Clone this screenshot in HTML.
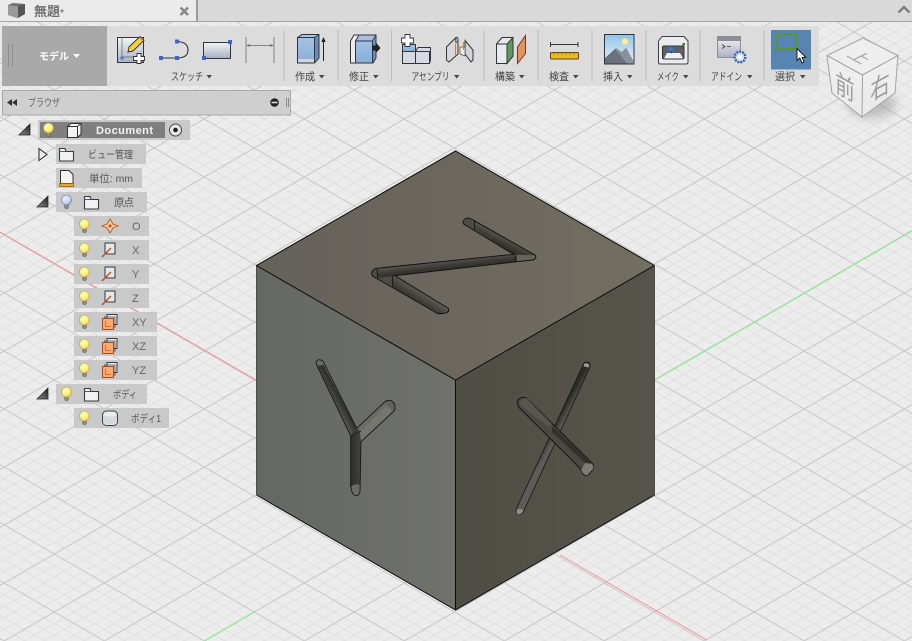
<!DOCTYPE html>
<html><head><meta charset="utf-8"><style>
html,body{margin:0;padding:0;background:#ececec;width:912px;height:641px;overflow:hidden}
svg{display:block}
text{font-family:"Liberation Sans","Noto Sans CJK JP",sans-serif}
.l{font-size:10.5px;fill:#444}
.t{font-size:10.5px;fill:#555}
</style></head><body>
<svg width="912" height="641" viewBox="0 0 912 641" xmlns="http://www.w3.org/2000/svg">
<defs>
<pattern id="grid" patternUnits="userSpaceOnUse" width="100" height="100" patternTransform="matrix(.5,-.29,.5,.29,454.3,496)">
<rect width="100" height="100" fill="#ececec"/>
<g stroke="#e0e0e0" stroke-width="2" fill="none">
<path d="M20 0V100M40 0V100M60 0V100M80 0V100M0 20H100M0 40H100M0 60H100M0 80H100"/>
</g>
<g stroke="#c8c8c8" stroke-width="2" fill="none"><path d="M0 0V100M100 0V100M0 0H100M0 100H100"/></g>
</pattern>
<linearGradient id="fl" x1="0" x2="1" y1="0" y2="0"><stop offset="0" stop-color="#656762"/><stop offset="1" stop-color="#70716c"/></linearGradient>
<linearGradient id="fr" x1="0" x2="1" y1="0" y2="0"><stop offset="0" stop-color="#504d45"/><stop offset="1" stop-color="#57544b"/></linearGradient>
<linearGradient id="ft" x1="0" x2="1" y1="0" y2="0"><stop offset="0" stop-color="#65615b"/><stop offset="1" stop-color="#726e61"/></linearGradient>
<linearGradient id="zt" gradientUnits="userSpaceOnUse" x1="503" y1="235" x2="498" y2="245"><stop offset="0" stop-color="#5b5950"/><stop offset=".55" stop-color="#403f3a"/><stop offset="1" stop-color="#2d2c29"/></linearGradient>
<linearGradient id="zd" gradientUnits="userSpaceOnUse" x1="450" y1="261" x2="451" y2="269.500"><stop offset="0" stop-color="#54524a"/><stop offset=".5" stop-color="#3c3b37"/><stop offset="1" stop-color="#2d2c29"/></linearGradient>
<linearGradient id="zl" gradientUnits="userSpaceOnUse" x1="424" y1="294" x2="417" y2="305"><stop offset="0" stop-color="#5b5950"/><stop offset=".55" stop-color="#403f3a"/><stop offset="1" stop-color="#2d2c29"/></linearGradient>
<linearGradient id="ya" gradientUnits="userSpaceOnUse" x1="331" y1="401" x2="340" y2="396"><stop offset="0" stop-color="#5c5c56"/><stop offset=".6" stop-color="#3d3d38"/><stop offset="1" stop-color="#2c2c28"/></linearGradient>
<linearGradient id="ys" gradientUnits="userSpaceOnUse" x1="351" y1="0" x2="361" y2="0"><stop offset="0" stop-color="#2e2e2a"/><stop offset="1" stop-color="#44443e"/></linearGradient>
<linearGradient id="xb" gradientUnits="userSpaceOnUse" x1="549" y1="433" x2="556" y2="437"><stop offset="0" stop-color="#2c2b28"/><stop offset="1" stop-color="#5e5c54"/></linearGradient>
<linearGradient id="blue" x1="0" x2="0" y1="0" y2="1"><stop offset="0" stop-color="#a9c5e6"/><stop offset="1" stop-color="#8aaed6"/></linearGradient>
<linearGradient id="wg" x1="0" x2="0" y1="0" y2="1"><stop offset="0" stop-color="#f4f4f4"/><stop offset="1" stop-color="#a8b0c4"/></linearGradient>
<linearGradient id="sky" x1="0" x2="0" y1="0" y2="1"><stop offset="0" stop-color="#8fc3e8"/><stop offset="1" stop-color="#eef5f8"/></linearGradient>
<linearGradient id="tri" x1="0" x2="1" y1="1" y2="0"><stop offset="0" stop-color="#888"/><stop offset="1" stop-color="#222"/></linearGradient>
<radialGradient id="by" cx=".4" cy=".35" r=".75"><stop offset="0" stop-color="#fffdd0"/><stop offset=".65" stop-color="#fcec66"/><stop offset="1" stop-color="#d4b63a"/></radialGradient>
<radialGradient id="bb" cx=".4" cy=".35" r=".7"><stop offset="0" stop-color="#eef3ff"/><stop offset=".7" stop-color="#bcd0f2"/><stop offset="1" stop-color="#7f94bb"/></radialGradient>
<filter id="b1" x="-50%" y="-50%" width="200%" height="200%"><feGaussianBlur stdDeviation="5"/></filter>
<filter id="b2"><feGaussianBlur stdDeviation=".35"/></filter>
<g id="bulb"><path d="M-1.800 4H1.800V8Q0 9.300-1.800 8Z" fill="#8a8a8a" stroke="#555" stroke-width=".5"/><circle r="5" fill="url(#by)" stroke="#b3a24a" stroke-width=".6"/></g>
<g id="bulbb"><path d="M-1.800 4H1.800V8Q0 9.300-1.800 8Z" fill="#8a8a8a" stroke="#555" stroke-width=".5"/><circle r="5" fill="url(#bb)" stroke="#6d7e9e" stroke-width=".6"/></g>
<g id="folder"><path d="M.5 2.500V13H14.500V3.500H7L6 .5H.5Z" fill="#f1f1f1" stroke="#333c4a" stroke-width="1.100"/><path d="M.5 3.500H7" stroke="#333c4a" stroke-width=".8"/></g>
<g id="axis"><path d="M3 1H13V12H3Z" fill="#e6e6e6" stroke="#333c4a" stroke-width="1"/><path d="M0 15L9 6" stroke="#c24f1e" stroke-width="1.400"/></g>
<g id="plane"><path d="M5 0.500H15V10.500H5Z" fill="#efefef" stroke="#333c4a" stroke-width="1"/><path d="M2.500 3H13V13H2.500Z" fill="none" stroke="#333c4a" stroke-width=".8"/><rect x=".5" y="4.500" width="11" height="11" fill="#f9ab74" stroke="#b5450e"/><path d="M3.500 7V12.500H9" stroke="#cf6a2e" fill="none"/></g>
</defs>

<!-- viewport -->
<rect width="912" height="641" fill="#ececec"/>
<rect width="912" height="641" fill="url(#grid)"/>
<path d="M0 232L256 380M560 555L706.700 640" stroke="#f78f8f" stroke-width="1"/>
<path d="M655 380L793 300L912 231M204.600 641L256 611" stroke="#7df07d" stroke-width="1"/>

<!-- big cube -->
<path d="M256.500 265.500L455.500 380V610L256.500 495Z" fill="url(#fl)"/>
<path d="M654.500 265.500L455.500 380V610L654.500 495Z" fill="url(#fr)"/>
<path d="M455.500 151L654.500 265.500L455.500 380L256.500 265.500Z" fill="url(#ft)"/>
<path d="M256.500 265.500V495M654.500 265.500V495" stroke="#4b4b47" stroke-width="1" fill="none"/>
<path d="M256.500 495L455.500 610L654.500 495M654.500 265.500L455.500 151L256.500 265.500L455.500 380L654.500 265.500M455.500 380V610" stroke="#0b0b0b" stroke-width="1" fill="none"/>

<!-- Z -->
<g filter="url(#b2)">
<path d="M470 218.300L535 255Q536.500 257 535.500 258Q534.500 260 532.700 260L516.700 261.700L395 275.700L448.300 308.300Q449.500 311 447.300 312.300Q444 314.300 437.500 313.500L372.500 276Q371 273 372 271.700Q373.500 268.800 376.700 268.300L513.500 254.300L463.500 224Q462.500 221 464 220Q466 217.300 470 218.300Z" fill="#4e4c46"/>
<path d="M470 218.300L535 255Q536 257 535.500 258L532.700 260L516.700 261.700L513.500 254.300L474.500 229Z" fill="url(#zt)"/>
<path d="M515.500 254.500L535 255.500Q536 257.500 532.700 260L516.700 261.700Z" fill="#66635a"/>
<path d="M377 268.500L516.700 254.300V261.700L395 275.700L377 278Z" fill="url(#zd)"/>
<path d="M392.500 276L448.300 308.300Q449.500 311 447.300 312.300Q444 314.300 437.500 313.500L392.500 287Z" fill="url(#zl)"/>
<path d="M470 218.300L535 255Q536.500 257 535.500 258Q534.500 260 532.700 260L516.700 261.700L395 275.700L448.300 308.300Q449.500 311 447.300 312.300Q444 314.300 437.500 313.500L372.500 276Q371 273 372 271.700Q373.500 268.800 376.700 268.300L513.500 254.300L463.500 224Q462.500 221 464 220Q466 217.300 470 218.300Z" fill="none" stroke="#111110" stroke-width=".9"/>
<path d="M474.500 220V229.500M515.700 254.500V261.500M377.300 269V277M392.500 276V286" stroke="#111" stroke-width=".8"/>
</g>

<!-- Y -->
<g filter="url(#b2)">
<path d="M323.300 361.700L356.700 428.300L385 401.700Q388 399.500 391 400.500Q395.500 403 395 408.300Q395 410.500 393.300 411.700L361 441.700L360 491.700Q359 495.700 356.700 495.700Q353 495.700 352 491.700L350.700 486.700V436L316.700 365Q315.500 362 317 360.500Q320 358.500 323.300 361.700Z" fill="#6a6b66"/>
<path d="M317 365.500L323.500 365L356.700 428.300L350.700 436Z" fill="url(#ya)"/>
<path d="M350.700 436L356.700 428.300L361 432V441.700L360 485Q355 483 350.700 487Z" fill="url(#ys)"/>
<path d="M360 432L385 407L393 410L361 441.700Z" fill="#75766f"/>
<path d="M385 401.700Q388 399.500 391 400.500Q395.500 403 395 408.300L393.300 411.700Q388 406 385 401.700Z" fill="#5f605a"/>
<path d="M323.300 361.700L356.700 428.300L385 401.700Q388 399.500 391 400.500Q395.500 403 395 408.300Q395 410.500 393.300 411.700L361 441.700L360 491.700Q359 495.700 356.700 495.700Q353 495.700 352 491.700L350.700 486.700V436L316.700 365Q315.500 362 317 360.500Q320 358.500 323.300 361.700Z" fill="none" stroke="#111" stroke-width=".8"/>
<path d="M350.700 436L361 431" stroke="#222" stroke-width=".8"/>
</g>

<!-- X -->
<g filter="url(#b2)">
<path d="M584 363Q586 361.500 588.500 362.300Q590.500 364 590 367L523.500 511.500Q521 515 518 514.500Q515.500 512.500 516.500 508.500Z" fill="url(#xb)" stroke="#141412" stroke-width=".8"/>
<path d="M584 364Q587 362 589.500 365.500L588.500 367.500Q586 366.500 583.500 366.500Z" fill="#9a9a92"/>
<path d="M517 509.500Q520 508 523.500 510.500Q521 515 518 514.500Q515.500 512.500 517 509.500Z" fill="#8f8f87"/>
<path d="M526.700 398.300L592.300 463.300Q594 466 593.300 468.300Q591 473 586.700 475.700Q583 476 580 468.300L518.300 406.700Q517 403 518 400Q522 396 526.700 398.300Z" fill="#4a4840" stroke="#111" stroke-width=".9"/>
<path d="M521 398.500L526.700 398.300L552 424L549 427L520 405Z" fill="#59574e"/>
<path d="M552 426L592 463Q588 464 585 463L552 432Z" fill="#31302c"/>
<path d="M585 463L592.300 464Q594 467 593 469L587 475.500Q583 475 581 470Z" fill="#7d7b73"/>
</g>

<!-- title bar -->
<rect x="0" y="0" width="912" height="22" fill="#d9d9d9"/>
<rect x="0" y="0" width="196" height="22" fill="#ebebeb"/>
<rect x="196" y="0" width="2" height="22" fill="#9c9c9c"/>
<rect x="0" y="21" width="912" height="1" fill="#a6a6a6"/>
<path d="M8 5L13 3L25 4V14L17 18L8 15Z" fill="#6f6f6f"/><path d="M8 5L18 6.500V18L8 15Z" fill="#9a9a9a"/><path d="M18 6.500L25 4V14L18 18Z" fill="#555"/>
<text x="34" y="16" style="font-size:13px;font-weight:bold;fill:#707070">無題<tspan style="font-size:10px;fill:#7d8a9c">*</tspan></text>
<path d="M180.500 7.500L188 15M188 7.500L180.500 15" stroke="#888" stroke-width="2.600"/>
<path d="M898.500 12.500L904 7L909.500 12.500" stroke="#7f7f7f" stroke-width="2.400" fill="none"/>

<!-- toolbar -->
<rect x="2" y="26" width="817" height="60" fill="#dcdcdc"/>
<rect x="2" y="26" width="105" height="60" fill="#a9a9a9"/>
<path d="M8.500 44V67M12.500 44V67" stroke="#8e8e8e"/>
<text x="39" y="60" style="font-size:10px;font-weight:bold;fill:#fff">モデル</text>
<path d="M73 54H80L76.500 58Z" fill="#fff"/>
<g stroke="#bcbcbc"><path d="M284 30V81M338 30V81M391.500 30V81M484 30V81M538 30V81M592 30V81M646 30V81M700 30V81M764 30V81" fill="none"/></g>

<!-- sketch icons -->
<rect x="117.500" y="37.500" width="26" height="25" fill="url(#wg)" stroke="#2f3540"/>
<rect x="120.500" y="56.500" width="3" height="3" fill="#4a79d0"/><path d="M122 37V57H143" stroke="#5c6474" fill="none" stroke-width=".7"/>
<path d="M129 47L140 36.500L144 40.500L133 51L128 52Z" fill="#f4d040" stroke="#2a2a2a" stroke-width=".9"/><path d="M139 37.500L140.500 36.500L144 40L143 41Z" fill="#b5703a"/>
<path d="M137 53.500H141V56.500H144.500V60.500H141V63.500H137V60.500H133.500V56.500H137Z" fill="#fff" stroke="#333" stroke-width=".9"/>
<path d="M161 58H177M177 41.500Q188 42 188 50Q188 58 177 58" stroke="#333" stroke-width="1.100" fill="none"/>
<g fill="#3a68c8"><rect x="159" y="56" width="4" height="4"/><rect x="175" y="39.500" width="4" height="4"/><rect x="175" y="56" width="4" height="4"/></g>
<rect x="203.500" y="42.500" width="27" height="16" fill="url(#wg)" stroke="#2f3540"/>
<g fill="#3a68c8"><rect x="228" y="40" width="4" height="4"/><rect x="202" y="56" width="4" height="4"/></g>
<path d="M246 37V63M274 37V63M246 45.500H274" stroke="#858585" fill="none"/>
<path d="M246 45.500L250 44V47ZM274 45.500L270 44V47Z" fill="#777"/>
<text x="171" y="80" class="l" textLength="32" lengthAdjust="spacingAndGlyphs">スケッチ</text><path d="M206.500 75H212L209.200 78.500Z" fill="#444"/>

<!-- create -->
<path d="M297.500 37.500L302 34.500H319V58L314.500 63H297.500Z" fill="url(#blue)" stroke="#2f3540"/>
<path d="M297.500 37.500H314.500L319 34.500M314.500 37.500V63" fill="none" stroke="#2f3540"/>
<path d="M315 38L318.500 35.500V57.500L315 62Z" fill="#6c8cb8"/>
<rect x="298" y="59" width="16" height="3.500" fill="#cfd4dd"/>
<path d="M323.500 61V39" stroke="#222"/><path d="M323.500 37L321.300 42H325.700Z" fill="#222"/>
<text x="295" y="80" class="l" textLength="20" lengthAdjust="spacingAndGlyphs">作成</text><path d="M319 75H324.500L321.700 78.500Z" fill="#444"/>

<!-- modify -->
<path d="M350.500 63V41L354 35H361V63Z" fill="#ededed" stroke="#2f3540"/>
<path d="M355.500 63V41L359 35H376V58L373 63Z" fill="url(#blue)" stroke="#2f3540"/>
<path d="M355.500 41H372.500L376 35M372.500 41V63" fill="none" stroke="#2f3540"/>
<path d="M373 42L375.500 37.500V57L373 62Z" fill="#6c8cb8"/>
<path d="M372 45.500H376V42.500L380.500 48L376 53V50.500H372Z" fill="#222"/>
<text x="349" y="80" class="l" textLength="20" lengthAdjust="spacingAndGlyphs">修正</text><path d="M373 75H378.500L375.700 78.500Z" fill="#444"/>

<!-- assembly -->
<path d="M402.500 44.500H415.500V51.500H402.500Z" fill="url(#blue)" stroke="#2f3540"/>
<path d="M402.500 51.500H415.500V63.500H402.500ZM415.500 51.500H429.500V63.500H415.500ZM415.500 51.500L418 47.500H430.500V60L429.500 63.500" fill="#d6dae0" stroke="#2f3540"/>
<path d="M405 34.500H410V38H413.500V43H410V46.500H405V43H401.500V38H405Z" fill="#fff" stroke="#333" stroke-width=".9"/>
<path d="M446.500 60V47L456 37.500L458 41V54L449 62Z" fill="#d5d8dd" stroke="#333"/>
<path d="M473 60V50L465 40.500V54L471 62Z" fill="#d0d3d8" stroke="#333"/>
<path d="M460 54V47H465V56Z" fill="#f1f1f1" stroke="#444" stroke-width=".7"/>
<path d="M455 40L457.500 37L458.500 40L456 43Z" fill="#aaa" stroke="#444" stroke-width=".6"/>
<path d="M455.500 44V56M463.500 42V50" stroke="#e2781e" stroke-width="1"/>
<text x="411.500" y="80" class="l" textLength="38" lengthAdjust="spacingAndGlyphs">アセンブリ</text><path d="M454 75H459.500L456.700 78.500Z" fill="#444"/>

<!-- construct -->
<path d="M496.500 44L502 37.500H513V56L507 63.500H496.500Z" fill="#e8eaee" stroke="#2f3540"/>
<path d="M507 44L513 37.500V56L507 63.500Z" fill="#5e9a55" stroke="#2f3540"/>
<path d="M496.500 44H507" stroke="#2f3540"/>
<path d="M517.500 47L525.500 35.500V53.500L517.500 63.500Z" fill="#e89260" stroke="#6b3a20"/>
<text x="495" y="80" class="l" textLength="20" lengthAdjust="spacingAndGlyphs">構築</text><path d="M519 75H524.500L521.700 78.500Z" fill="#444"/>

<!-- inspect -->
<path d="M550.500 44.500H578M550.500 42V47M578 42V47" stroke="#333" fill="none"/>
<rect x="550.500" y="52.500" width="28" height="6.500" rx="1" fill="#eab924" stroke="#5c4a14"/>
<path d="M554 52.500V55M558 52.500V55M562 52.500V55M566 52.500V55M570 52.500V55M574 52.500V55" stroke="#7a5f10" stroke-width=".6"/>
<text x="549" y="80" class="l" textLength="20" lengthAdjust="spacingAndGlyphs">検査</text><path d="M573 75H578.500L575.700 78.500Z" fill="#444"/>

<!-- insert -->
<rect x="604.500" y="34.500" width="29.500" height="29.500" fill="url(#sky)" stroke="#2f3540"/>
<circle cx="625" cy="41.500" r="3" fill="#fdf0a8" stroke="#f0d888" stroke-width="1"/>
<path d="M605 58L616 48L622 52L626 47.500L634 62V63.500H605Z" fill="#8a909c"/>
<path d="M615 49L627 63.500H605V58Z" fill="#6a707c"/>
<text x="603" y="80" class="l" textLength="20" lengthAdjust="spacingAndGlyphs">挿入</text><path d="M627 75H632.500L629.700 78.500Z" fill="#444"/>

<!-- make -->
<path d="M658.500 41L662 36.500H684L688 41V62Q688 64 686 64H660Q658.500 64 658.500 62Z" fill="#ececec" stroke="#3b3f46"/>
<rect x="662.500" y="46" width="21.500" height="13" rx="1.500" fill="#5d6068" stroke="#333"/>
<path d="M664 58.500L667 53H680L683 58.500Z" fill="#f2f2f2"/>
<rect x="669" y="46.500" width="4.500" height="4.500" fill="#3c78c8"/><path d="M670 51H672.500L671.200 54Z" fill="#2a5590"/>
<rect x="682.500" y="43" width="2.500" height="2.500" fill="#1d8a2a"/>
<text x="657" y="80" class="l" textLength="22" lengthAdjust="spacingAndGlyphs">メイク</text><path d="M683 75H688.500L685.700 78.500Z" fill="#444"/>

<!-- addin -->
<rect x="717.500" y="36.500" width="23" height="21" fill="url(#wg)" stroke="#8b8f98"/>
<rect x="718" y="37" width="22" height="4" fill="#8c8f98"/>
<path d="M722 44.500L725 46.500L722 48.500M727 46.500H731" stroke="#333" fill="none" stroke-width=".8"/>
<circle cx="740" cy="57" r="5.300" fill="#cfe0f4" stroke="#35619c" stroke-width="2.400" stroke-dasharray="2 1"/>
<circle cx="740" cy="57" r="2.200" fill="#fff"/>
<text x="711" y="80" class="l" textLength="31" lengthAdjust="spacingAndGlyphs">アドイン</text><path d="M747 75H752.500L749.700 78.500Z" fill="#444"/>

<!-- select -->
<rect x="771" y="30" width="40" height="39.500" fill="#5685b1"/>
<rect x="776.500" y="34.500" width="20" height="14.500" fill="none" stroke="#5a9a14" stroke-width="1.600"/>
<path d="M797 48.500V60.500L799.800 58L802 63L804 62L802 57.300H805.800Z" fill="#fff" stroke="#111" stroke-width=".9"/>
<text x="775" y="80" class="l" textLength="20" lengthAdjust="spacingAndGlyphs">選択</text><path d="M800 75H805.500L802.700 78.500Z" fill="#444"/>

<!-- viewcube -->
<ellipse cx="872" cy="104" rx="24" ry="14" fill="#888" opacity=".45" filter="url(#b1)"/>
<path d="M863 38L898 55.500L895 93L862 117L832 93L827 55.500Z" fill="#eeeeee" fill-opacity=".92"/>
<path d="M863 38L898 55.500L862.500 75L827 55.500ZM827 55.500L832 93L862 117L862.500 75M898 55.500L895 93L862 117" fill="none" stroke="#a2a2a2"/>
<text transform="matrix(.67,.37,-.67,.33,854,60)" style="font-size:24px;fill:#a4a4a4" text-anchor="middle">上</text>
<text transform="matrix(.75,.41,0,1,845,96.500)" style="font-size:26px;fill:#9c9c9c" text-anchor="middle">前</text>
<text transform="matrix(.75,-.41,0,1,880,96)" style="font-size:26px;fill:#9c9c9c" text-anchor="middle">右</text>

<!-- browser header -->
<rect x="2.500" y="90.500" width="288" height="24.500" fill="#cfcfcf" stroke="#a8a8a8"/>
<path d="M7 102.500L12 99V106ZM12 102.500L17 99V106Z" fill="#333"/>
<text x="28" y="106" style="font-size:10.500px;fill:#666" textLength="32" lengthAdjust="spacingAndGlyphs">ブラウザ</text>
<circle cx="274.500" cy="102.500" r="4.300" fill="#222"/><rect x="271.500" y="101.700" width="6" height="1.600" fill="#ddd"/>
<path d="M286.500 98V107M288.500 98V107" stroke="#888"/>

<!-- tree -->
<g fill="#c9c9c9">
<rect x="38" y="120" width="152" height="20"/>
<rect x="56" y="144" width="90" height="20"/>
<rect x="56" y="168" width="86" height="20"/>
<rect x="56" y="192" width="91" height="20"/>
<rect x="74" y="216" width="75" height="20"/>
<rect x="74" y="240" width="75" height="20"/>
<rect x="74" y="264" width="75" height="20"/>
<rect x="74" y="288" width="75" height="20"/>
<rect x="74" y="312" width="83" height="20"/>
<rect x="74" y="336" width="83" height="20"/>
<rect x="74" y="360" width="83" height="20"/>
<rect x="56" y="384" width="91" height="20"/>
<rect x="74" y="408" width="95" height="20"/>
</g>
<rect x="40" y="122" width="125" height="16" fill="#7f7f7f"/>
<path d="M19 135L30 124V135Z" fill="url(#tri)" stroke="#222" stroke-width=".7"/>
<path d="M37 207L48 196V207Z" fill="url(#tri)" stroke="#222" stroke-width=".7"/>
<path d="M37 399L48 388V399Z" fill="url(#tri)" stroke="#222" stroke-width=".7"/>
<path d="M39 148.500L47 154.500L39 160.500Z" fill="#efefef" stroke="#222" stroke-width="1"/>

<use href="#bulb" x="48.500" y="128"/>
<path d="M67.500 126.500L71 123.500H81V134L77.500 137.500H67.500Z" fill="#f4f4f4" stroke="#333"/><path d="M67.500 126.500H77.500L81 123.500M77.500 126.500V137.500" fill="none" stroke="#333"/>
<text x="96" y="134" style="font-size:11px;font-weight:bold;fill:#f2f2f2" textLength="57">Document</text>
<circle cx="175.500" cy="130" r="6" fill="#e8e8e8" stroke="#444"/><circle cx="175.500" cy="130" r="2.300" fill="#222"/>

<use href="#folder" x="59" y="148"/>
<text x="88" y="158" class="t" textLength="45" lengthAdjust="spacingAndGlyphs">ビュー管理</text>

<path d="M60.500 170.500H69L73 174.500V183.500H60.500Z" fill="#f3f3f3" stroke="#333"/><rect x="59.500" y="183.500" width="14" height="3" fill="#e8a91e" stroke="#7c5a10" stroke-width=".7"/>
<text x="89" y="182" class="t" textLength="44">単位: mm</text>

<use href="#bulbb" x="66.500" y="200"/>
<use href="#folder" x="84" y="196"/>
<text x="114" y="206" class="t" textLength="20">原点</text>

<use href="#bulb" x="84.500" y="224"/>
<path d="M110 219L113 224L118 226L113 228L110 233L107 228L102 226L107 224Z" fill="#f5c9a6" stroke="#c2551a" stroke-width=".9"/><circle cx="110" cy="226" r="1.500" fill="#c2551a"/>
<text x="132" y="230" style="font-size:11px;fill:#666">O</text>

<use href="#bulb" x="84.500" y="248"/>
<use href="#axis" x="102" y="242"/>
<text x="132" y="254" style="font-size:11px;fill:#666">X</text>

<use href="#bulb" x="84.500" y="272"/>
<use href="#axis" x="102" y="266"/>
<text x="132" y="278" style="font-size:11px;fill:#666">Y</text>

<use href="#bulb" x="84.500" y="296"/>
<use href="#axis" x="102" y="290"/>
<text x="132" y="302" style="font-size:11px;fill:#666">Z</text>

<use href="#bulb" x="84.500" y="320"/>
<use href="#plane" x="102" y="314"/>
<text x="132" y="326" style="font-size:11px;fill:#666">XY</text>

<use href="#bulb" x="84.500" y="344"/>
<use href="#plane" x="102" y="338"/>
<text x="132" y="350" style="font-size:11px;fill:#666">XZ</text>

<use href="#bulb" x="84.500" y="368"/>
<use href="#plane" x="102" y="362"/>
<text x="132" y="374" style="font-size:11px;fill:#666">YZ</text>

<use href="#bulb" x="66.500" y="392"/>
<use href="#folder" x="84" y="388"/>
<text x="113" y="398" class="t" textLength="24" lengthAdjust="spacingAndGlyphs">ボディ</text>

<use href="#bulb" x="84.500" y="416"/>
<rect x="102.500" y="411" width="15" height="14.500" rx="4" fill="#eeeeee" stroke="#39414e"/>
<path d="M103 415Q110 418 117 415V423Q110 426 103 423Z" fill="#d6d9de"/>
<text x="131" y="422" class="t" textLength="30" lengthAdjust="spacingAndGlyphs">ボディ1</text>
</svg>
</body></html>
